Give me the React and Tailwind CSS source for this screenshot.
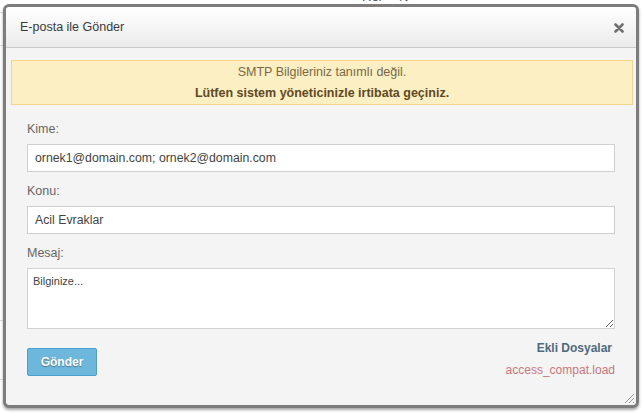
import React from "react";

const font = { fontFamily: '"Liberation Sans", Arial, sans-serif' };

export default function App() {
  return (
    <div
      className="relative w-[643px] h-[413px] bg-white overflow-hidden"
      style={font}
    >
      {/* page content behind the dialog */}
      <span className="absolute left-[362px] top-[-11px] text-[13px] leading-[16px] text-[#555]">Rol</span>
      <span className="absolute left-[399px] top-[-11px] text-[13px] leading-[16px] text-[#555]">N</span>
      <div className="absolute left-0 top-[12px] w-[4px] h-px bg-[#ddd]" />
      <div className="absolute left-0 top-[45px] w-[4px] h-px bg-[#ddd]" />
      <div className="absolute left-0 top-[320px] w-[4px] h-px bg-[#ddd]" />
      <div className="absolute left-0 top-[379px] w-[4px] h-px bg-[#ddd]" />

      {/* dialog */}
      <div className="relative z-10 ml-[3px] mt-[4px] w-[636px] h-[404px] border-[3px] border-[#7d7d7d] rounded-[6px] bg-[#f4f4f4] shadow-[0_2px_3px_rgba(0,0,0,0.35)] flex flex-col overflow-hidden">
        {/* header */}
        <div className="h-[41px] shrink-0 flex items-center justify-between pl-[14px] pr-[12px] border-b border-[#c9c9c9] bg-gradient-to-b from-[#ffffff] to-[#ebebeb] rounded-t-[3px]">
          <span className="text-[12.5px] text-[#3a3a3a] leading-none">E-posta ile Gönder</span>
          <svg width="10" height="10" viewBox="0 0 10 10" className="mt-[1px]">
            <path d="M1.5 1.5 L8.5 8.5 M8.5 1.5 L1.5 8.5" stroke="#707070" strokeWidth="2.6" strokeLinecap="round" />
          </svg>
        </div>

        {/* body */}
        <div className="flex-1 flex flex-col">
          <div className="mt-[12px] ml-[5px] mr-[3px] h-[45px] border border-[#f3d68c] bg-[#fcefc4] flex flex-col items-center justify-center gap-[3px]">
            <div className="text-[12.5px] leading-[18px] text-[#7a6843]">SMTP Bilgileriniz tanımlı değil.</div>
            <div className="text-[12.5px] leading-[18px] font-bold text-[#5f4a23]">Lütfen sistem yöneticinizle irtibata geçiniz.</div>
          </div>

          <div className="px-[21px] pt-[15px] flex flex-col">
            <label className="text-[12.5px] leading-[18px] text-[#666] mb-[6px]">Kime:</label>
            <input
              readOnly
              value="ornek1@domain.com; ornek2@domain.com"
              className="h-[28px] w-full border border-[#cfcfcf] bg-white px-[7px] text-[12.3px] text-[#444] outline-none"
              style={font}
            />
            <label className="mt-[10px] text-[12.5px] leading-[18px] text-[#666] mb-[6px]">Konu:</label>
            <input
              readOnly
              value="Acil Evraklar"
              className="h-[28px] w-full border border-[#cfcfcf] bg-white px-[7px] text-[12.3px] text-[#444] outline-none"
              style={font}
            />
            <label className="mt-[10px] text-[12.5px] leading-[18px] text-[#666] mb-[6px]">Mesaj:</label>
            <textarea
              readOnly
              defaultValue="Bilginize..."
              className="h-[61px] w-full border border-[#d2d2d2] bg-white px-[5px] py-[4px] text-[11px] text-[#444] outline-none resize"
              style={font}
            />
            <div className="flex justify-between items-start">
              <button
                className="mt-[19px] w-[70px] h-[28px] border border-[#4c9fcb] bg-[#6db6dc] rounded-[2px] text-white font-bold text-[12px] [text-shadow:0_1px_1px_rgba(0,0,0,0.35)]"
                style={font}
              >
                Gönder
              </button>
              <div className="mt-[10px] flex flex-col items-end">
                <span className="text-[12px] leading-[18px] font-bold text-[#4f6a7e] pr-[3px]">Ekli Dosyalar</span>
                <span className="mt-[4px] text-[12px] leading-[18px] text-[#c97580]">access_compat.load</span>
              </div>
            </div>
          </div>
        </div>

        {/* resize grip */}
        <svg
          width="12"
          height="12"
          viewBox="0 0 12 12"
          className="absolute right-[1px] bottom-[1px]"
        >
          <path d="M11 2 L2 11 M11 6 L6 11 M11 10 L10 11" stroke="#9a9a9a" strokeWidth="1" />
        </svg>
      </div>
    </div>
  );
}
